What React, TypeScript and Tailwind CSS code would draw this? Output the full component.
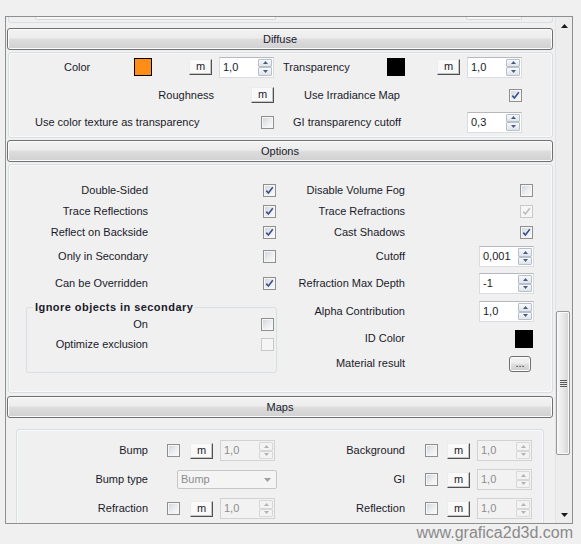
import React from "react";

type CheckProps = { checked?: boolean; disabled?: boolean; className?: string };

function Check({ checked = false, disabled = false, className = "" }: CheckProps) {
  return (
    <div
      className={`${className} shrink-0 w-[13px] h-[13px] border flex items-center justify-center ${
        disabled
          ? "border-[#c9c9c9] bg-[#f5f5f5]"
          : "border-[#8e8f8f] bg-[linear-gradient(135deg,#cfd3d8_0%,#eceef0_55%,#fbfbfb_100%)] shadow-[inset_0_0_0_1px_#f6f6f6]"
      }`}
    >
      {checked && (
        <svg width="9" height="9" viewBox="0 0 9 9">
          <path
            d="M1.3 4.6 L3.4 7 L7.8 1.3"
            fill="none"
            stroke={disabled ? "#bdbdbd" : "#3b4f8e"}
            strokeWidth="1.6"
          />
        </svg>
      )}
    </div>
  );
}

function MBtn({ className = "" }: { className?: string }) {
  return (
    <div
      className={`${className} shrink-0 w-[23px] h-[16px] flex items-center justify-center bg-[#f9f9f9] border border-t-[#ececec] border-l-[#ececec] border-r-[#505050] border-b-[#505050] shadow-[inset_-1px_-1px_0_#c4c4c4] leading-none pb-[1px]`}
    >
      m
    </div>
  );
}

function Arrow({ up = false, disabled = false }: { up?: boolean; disabled?: boolean }) {
  return (
    <div
      className={`flex-1 flex items-center justify-center border rounded-[1px] ${
        disabled
          ? "border-[#d8d8d8] bg-[#f3f3f3]"
          : "border-[#b7bfcb] bg-[linear-gradient(#f8f9fb,#dfe4ea)]"
      }`}
    >
      <svg width="5" height="3" viewBox="0 0 5 3">
        <path d={up ? "M0 3 L2.5 0 L5 3Z" : "M0 0 L2.5 3 L5 0Z"} fill={disabled ? "#b3b3b3" : "#4a5a83"} />
      </svg>
    </div>
  );
}

function Spin({ value, disabled = false, className = "" }: { value: string; disabled?: boolean; className?: string }) {
  return (
    <div
      className={`${className} shrink-0 w-[55px] h-[21px] border flex items-stretch ${
        disabled
          ? "border-[#d2d2d2] bg-[#f2f2f2] text-[#8d8d8d]"
          : "border-[#d9dce1] border-t-[#b5b8bf] bg-white"
      }`}
    >
      <div className="flex-1 flex items-center pl-[3px]">{value}</div>
      <div className="w-[15px] flex flex-col py-[1px] pr-[1px]">
        <Arrow up disabled={disabled} />
        <Arrow disabled={disabled} />
      </div>
    </div>
  );
}

function Header({ title }: { title: string }) {
  return (
    <div className="ml-[1px] mr-[2px] h-[22px] rounded-[3px] border border-[#707070] bg-[linear-gradient(#f3f3f3_0%,#ececec_45%,#dddddd_52%,#d0d0d0_100%)] shadow-[inset_0_0_0_1px_#fbfbfb] flex items-center justify-center">
      {title}
    </div>
  );
}

function Row({ children, className = "" }: { children: React.ReactNode; className?: string }) {
  return <div className={`${className} flex items-center`}>{children}</div>;
}

export default function App() {
  return (
    <div className="w-[581px] h-[544px] bg-[#f0f0f0] pt-[16px] pl-[5px] overflow-hidden font-['Liberation_Sans',Arial,sans-serif] text-[11px] text-[#1a1a2a]">
      {/* frame */}
      <div className="w-[568px] h-[508px] border border-[#8e8f8f] flex">
        {/* content */}
        <div className="w-[549px] h-full overflow-hidden flex flex-col">
          {/* remnant of previous section */}
          <div className="shrink-0 ml-[2px] mr-[2px] h-[6px] border-x border-b border-[#d5dfe5] rounded-b-[3px] flex items-start">
            <div className="ml-[26px] w-[241px] h-[3px] border-x border-b border-[#d3d7dc] rounded-b-[2px] bg-[#f7f7f7]" />
            <div className="ml-[190px] w-[56px] h-[3px] border-x border-b border-[#d3d7dc] rounded-b-[2px] bg-[#f7f7f7]" />
          </div>

          {/* Diffuse */}
          <div className="shrink-0 mt-[5px]">
            <Header title="Diffuse" />
          </div>
          <div className="shrink-0 mt-[2px] ml-[2px] mr-[2px] h-[86px] border border-[#d5dfe5] rounded-[3px] shadow-[inset_0_0_0_1px_#f9f9f9] pt-[3px] flex flex-col">
            <Row className="h-[22px]">
              <div className="w-[125px] pl-[55px]">Color</div>
              <div className="shrink-0 w-[18px] h-[18px] border border-black bg-[#ff8e16]" />
              <MBtn className="ml-[37px]" />
              <Spin className="ml-[7px]" value="1,0" />
              <div className="w-[113px] pl-[9px]">Transparency</div>
              <div className="shrink-0 w-[18px] h-[18px] bg-black" />
              <MBtn className="ml-[32px]" />
              <Spin className="ml-[7px]" value="1,0" />
            </Row>
            <Row className="h-[22px] mt-[6px]">
              <div className="w-[205px] text-right">Roughness</div>
              <MBtn className="ml-[37px]" />
              <div className="w-[126px] text-right">Use Irradiance Map</div>
              <Check className="ml-[109px]" checked />
            </Row>
            <Row className="h-[22px] mt-[5px]">
              <div className="w-[252px] pl-[26px]">Use color texture as transparency</div>
              <Check />
              <div className="w-[127px] text-right">GI transparency cutoff</div>
              <Spin className="ml-[66px]" value="0,3" />
            </Row>
          </div>

          {/* Options */}
          <div className="shrink-0 mt-[2px]">
            <Header title="Options" />
          </div>
          <div className="shrink-0 mt-[2px] ml-[2px] mr-[2px] h-[229px] border border-[#d5dfe5] rounded-[3px] shadow-[inset_0_0_0_1px_#f9f9f9] pt-[15px] flex">
            {/* left column */}
            <div className="w-[271px] shrink-0 flex flex-col">
              <Row className="h-[21px]">
                <div className="w-[139px] text-right">Double-Sided</div>
                <Check className="ml-[115px]" checked />
              </Row>
              <Row className="h-[21px]">
                <div className="w-[139px] text-right">Trace Reflections</div>
                <Check className="ml-[115px]" checked />
              </Row>
              <Row className="h-[21px]">
                <div className="w-[139px] text-right">Reflect on Backside</div>
                <Check className="ml-[115px]" checked />
              </Row>
              <Row className="h-[21px] mt-[3px]">
                <div className="w-[139px] text-right">Only in Secondary</div>
                <Check className="ml-[115px]" />
              </Row>
              <Row className="h-[21px] mt-[6px]">
                <div className="w-[139px] text-right">Can be Overridden</div>
                <Check className="ml-[115px]" checked />
              </Row>
              <fieldset className="mt-[6px] ml-[17px] w-[251px] border border-[#d5dfe5] rounded-[3px] pb-[21px]">
                <legend className="ml-[6px] px-[2px] font-bold leading-[14px] tracking-[0.45px]">
                  Ignore objects in secondary
                </legend>
                <Row className="h-[14px] mt-[3px]">
                  <div className="w-[121px] text-right">On</div>
                  <Check className="ml-[113px]" />
                </Row>
                <Row className="h-[14px] mt-[6px]">
                  <div className="w-[121px] text-right">Optimize exclusion</div>
                  <Check className="ml-[113px]" disabled />
                </Row>
              </fieldset>
            </div>
            {/* right column */}
            <div className="flex-1 flex flex-col">
              <Row className="h-[21px]">
                <div className="w-[125px] text-right">Disable Volume Fog</div>
                <Check className="ml-[115px]" />
              </Row>
              <Row className="h-[21px]">
                <div className="w-[125px] text-right">Trace Refractions</div>
                <Check className="ml-[115px]" checked disabled />
              </Row>
              <Row className="h-[21px]">
                <div className="w-[125px] text-right">Cast Shadows</div>
                <Check className="ml-[115px]" checked />
              </Row>
              <Row className="h-[21px] mt-[3px]">
                <div className="w-[125px] text-right">Cutoff</div>
                <Spin className="ml-[74px]" value="0,001" />
              </Row>
              <Row className="h-[21px] mt-[6px]">
                <div className="w-[125px] text-right">Refraction Max Depth</div>
                <Spin className="ml-[74px]" value="-1" />
              </Row>
              <Row className="h-[21px] mt-[7px]">
                <div className="w-[125px] text-right">Alpha Contribution</div>
                <Spin className="ml-[74px]" value="1,0" />
              </Row>
              <Row className="h-[21px] mt-[6px]">
                <div className="w-[125px] text-right">ID Color</div>
                <div className="ml-[110px] shrink-0 w-[18px] h-[18px] bg-black" />
              </Row>
              <Row className="h-[21px] mt-[4px]">
                <div className="w-[125px] text-right">Material result</div>
                <div className="ml-[104px] shrink-0 w-[22px] h-[16px] rounded-[3px] border border-[#707070] bg-[linear-gradient(#f3f3f3_0%,#ececec_45%,#dddddd_52%,#d0d0d0_100%)] shadow-[inset_0_0_0_1px_#fbfbfb] flex items-center justify-center leading-none">
                  ...
                </div>
              </Row>
            </div>
          </div>

          {/* Maps */}
          <div className="shrink-0 mt-[3px]">
            <Header title="Maps" />
          </div>
          <div className="shrink-0 mt-[11px] ml-[10px] w-[528px] border border-[#d5dfe5] rounded-[3px] shadow-[inset_0_0_0_1px_#f9f9f9] pt-[10px] pb-[10px] flex flex-col gap-[8px]">
            <Row className="h-[21px]">
              <div className="w-[263px] shrink-0 flex items-center">
                <div className="w-[131px] text-right">Bump</div>
                <Check className="ml-[19px]" />
                <MBtn className="ml-[10px]" />
                <Spin className="ml-[7px]" value="1,0" disabled />
              </div>
              <div className="w-[125px] text-right">Background</div>
              <Check className="ml-[20px]" />
              <MBtn className="ml-[9px]" />
              <Spin className="ml-[7px]" value="1,0" disabled />
            </Row>
            <Row className="h-[21px]">
              <div className="w-[263px] shrink-0 flex items-center">
                <div className="w-[131px] text-right">Bump type</div>
                <div className="ml-[29px] shrink-0 w-[100px] h-[19px] rounded-[2px] border border-[#c6c6c6] bg-[#f4f4f4] text-[#8d8d8d] flex items-center justify-between pl-[3px] pr-[5px]">
                  <span>Bump</span>
                  <svg width="7" height="4" viewBox="0 0 7 4">
                    <path d="M0 0 L3.5 4 L7 0Z" fill="#a0a0a0" />
                  </svg>
                </div>
              </div>
              <div className="w-[125px] text-right">GI</div>
              <Check className="ml-[20px]" />
              <MBtn className="ml-[9px]" />
              <Spin className="ml-[7px]" value="1,0" disabled />
            </Row>
            <Row className="h-[21px]">
              <div className="w-[263px] shrink-0 flex items-center">
                <div className="w-[131px] text-right">Refraction</div>
                <Check className="ml-[19px]" />
                <MBtn className="ml-[10px]" />
                <Spin className="ml-[7px]" value="1,0" disabled />
              </div>
              <div className="w-[125px] text-right">Reflection</div>
              <Check className="ml-[20px]" />
              <MBtn className="ml-[9px]" />
              <Spin className="ml-[7px]" value="1,0" disabled />
            </Row>
          </div>
        </div>

        {/* scrollbar */}
        <div className="w-[17px] h-full flex flex-col bg-[#ededed] border-l border-[#e2e3e5]">
          <div className="h-[17px] shrink-0 flex items-center justify-center">
            <svg width="7" height="4" viewBox="0 0 7 4">
              <path d="M0 4 L3.5 0 L7 4Z" fill="#1a1a1a" />
            </svg>
          </div>
          <div className="flex-1 pt-[277px]">
            <div className="w-[14px] h-[144px] rounded-[2px] border border-[#989898] bg-[linear-gradient(90deg,#f6f6f6_0%,#e9e9e9_50%,#d4d4d4_100%)] shadow-[inset_0_0_0_1px_#fafafa] flex flex-col items-center justify-center gap-[1px]">
              <div className="w-[7px] h-[1px] bg-[#5a5a5a]" />
              <div className="w-[7px] h-[1px] bg-[#5a5a5a]" />
              <div className="w-[7px] h-[1px] bg-[#5a5a5a]" />
              <div className="w-[7px] h-[1px] bg-[#5a5a5a]" />
            </div>
          </div>
          <div className="h-[17px] shrink-0 flex items-center justify-center">
            <svg width="7" height="4" viewBox="0 0 7 4">
              <path d="M0 0 L3.5 4 L7 0Z" fill="#1a1a1a" />
            </svg>
          </div>
        </div>
      </div>

      {/* watermark */}
      <div className="w-[568px] text-right text-[16px] leading-[18px] text-[#8a8a8a] font-['Liberation_Sans',Arial,sans-serif]">
        www.grafica2d3d.com
      </div>
    </div>
  );
}
